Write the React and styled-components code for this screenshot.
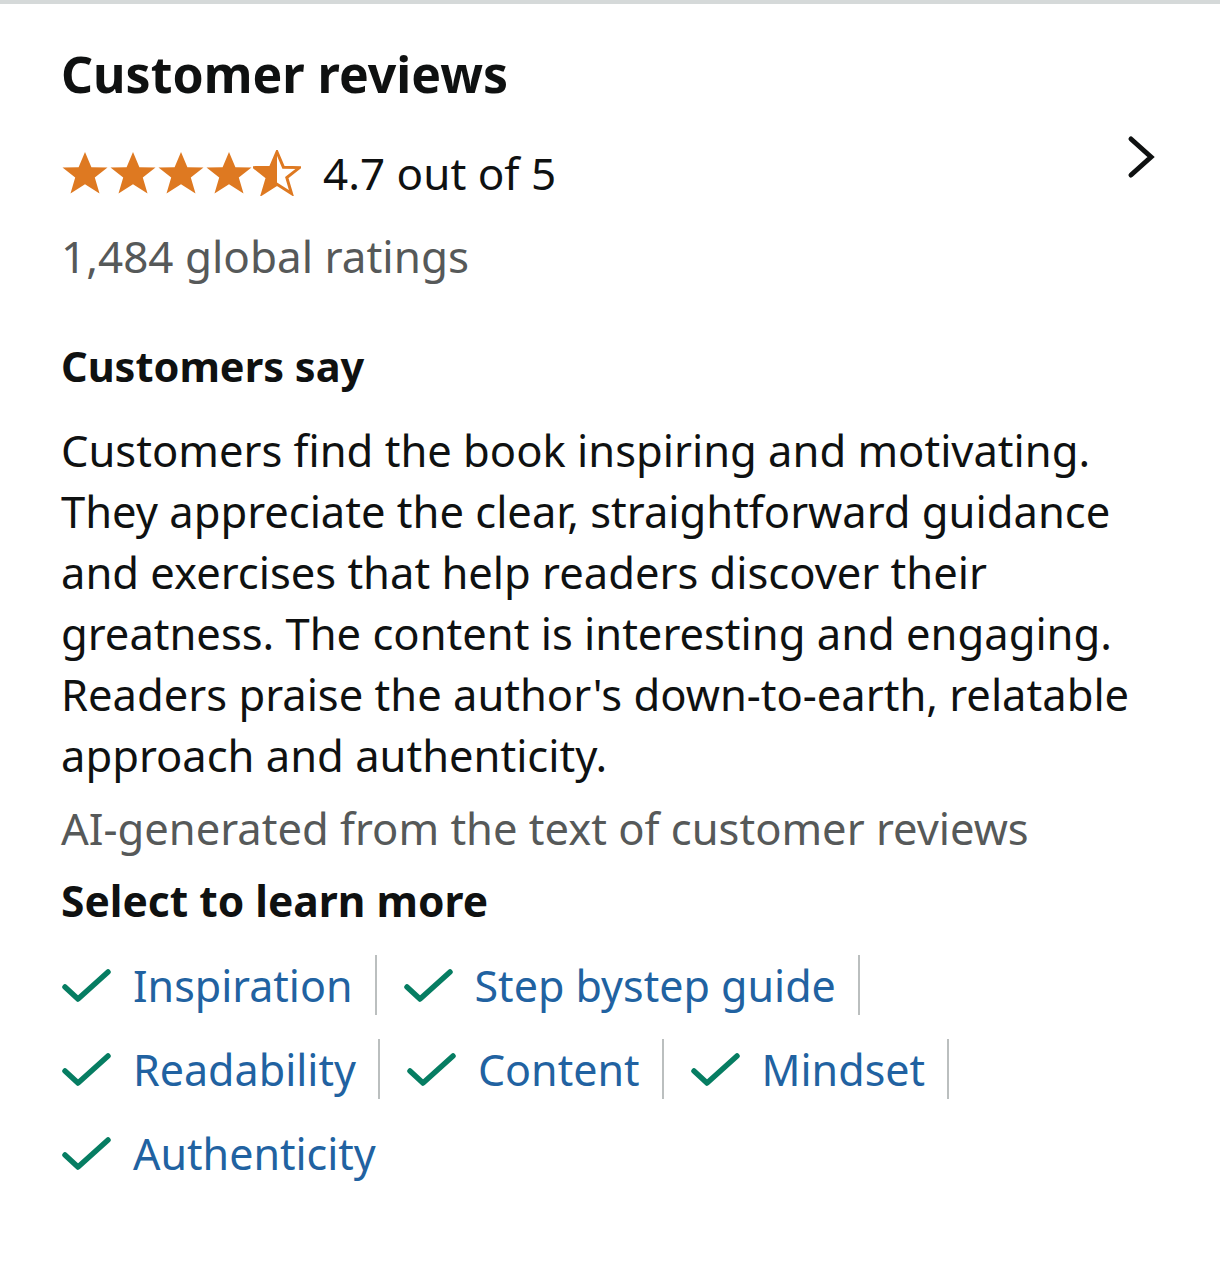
import React from "react";
import styled, { createGlobalStyle } from "styled-components";

const GlobalStyle = createGlobalStyle`
  html, body {
    margin: 0;
    padding: 0;
    background: #fff;
  }
  body {
    font-family: "Noto Sans", "Open Sans", sans-serif;
    color: #0f1111;
  }
`;

const Card = styled.section`
  border-top: 4px solid #d5d9d9;
  padding: 37px 62px 60px 61px;
  min-height: 1180px;
`;

const Title = styled.h2`
  margin: 0;
  font-size: 50px;
  font-weight: 700;
  line-height: 66px;
`;

const RatingRow = styled.a`
  display: flex;
  align-items: center;
  margin-top: 36px;
  color: #0f1111;
  text-decoration: none;
`;

const Stars = styled.div`
  display: flex;
  margin-right: 22px;
`;

const RatingText = styled.span`
  font-size: 44px;
  flex: 1;
`;

const Chevron = styled.span`
  display: flex;
  align-self: flex-start;
  margin-top: -8px;
  margin-right: 1px;
`;

const Count = styled.div`
  margin-top: 23px;
  font-size: 44px;
  color: #565959;
`;

const SubHeading = styled.h3`
  margin: ${(p) => p.$top}px 0 0;
  font-size: ${(p) => p.$size}px;
  font-weight: 700;
  line-height: 56px;
`;

const Summary = styled.p`
  margin: 26px 0 0;
  font-size: 43.5px;
  line-height: 61px;
`;

const Note = styled.p`
  margin: 12px 0 0;
  font-size: 43.5px;
  line-height: 61px;
  color: #565959;
`;

const AspectList = styled.div`
  display: flex;
  flex-direction: column;
  gap: 24px;
  margin-top: 26px;
`;

const AspectRow = styled.div`
  display: flex;
  flex-wrap: wrap;
`;

const Aspect = styled.a`
  display: flex;
  align-items: center;
  gap: 20px;
  height: 60px;
  padding: 0 ${(p) => (p.$last ? 0 : 22)}px 0 ${(p) => (p.$first ? 0 : 26)}px;
  border-right: ${(p) => (p.$last ? "none" : "2px solid #bbbfbf")};
  color: #2162a1;
  font-size: 43px;
  text-decoration: none;
`;

const Check = () => (
  <svg width="52" height="34" viewBox="0 0 52 34" fill="none">
    <path
      d="M4 19 L17 31 L47 4"
      stroke="#067d62"
      strokeWidth="5.5"
      strokeLinecap="round"
      strokeLinejoin="round"
    />
  </svg>
);

const starPath =
  "M24 2 L30.4 17.2 L46.5 17.6 L33.8 27.6 L38.5 43.5 L24 34.2 L9.5 43.5 L14.2 27.6 L1.5 17.6 L17.6 17.2 Z";

const Star = ({ half }) => (
  <svg width="48" height="46" viewBox="0 0 48 46">
    {half ? (
      <>
        <defs>
          <clipPath id="left-half">
            <rect x="0" y="0" width="24" height="46" />
          </clipPath>
        </defs>
        <path d={starPath} fill="none" stroke="#de7921" strokeWidth="3" />
        <path d={starPath} fill="#de7921" clipPath="url(#left-half)" />
      </>
    ) : (
      <path d={starPath} fill="#de7921" />
    )}
  </svg>
);

const aspectRows = [
  ["Inspiration", "Step bystep guide"],
  ["Readability", "Content", "Mindset"],
  ["Authenticity"],
];

export default function App() {
  return (
    <>
      <GlobalStyle />
      <Card>
        <Title>Customer reviews</Title>
        <RatingRow href="#">
          <Stars>
            <Star />
            <Star />
            <Star />
            <Star />
            <Star half />
          </Stars>
          <RatingText>4.7 out of 5</RatingText>
          <Chevron>
            <svg width="30" height="44" viewBox="0 0 30 44" fill="none">
              <path
                d="M4 4 L24 22 L4 40"
                stroke="#0f1111"
                strokeWidth="5"
                strokeLinecap="round"
              />
            </svg>
          </Chevron>
        </RatingRow>
        <Count>1,484 global ratings</Count>

        <SubHeading $top={52} $size={41.5}>Customers say</SubHeading>
        <Summary>
          Customers find the book inspiring and motivating. They appreciate the
          clear, straightforward guidance and exercises that help readers
          discover their greatness. The content is interesting and engaging.
          Readers praise the author's down-to-earth, relatable approach and
          authenticity.
        </Summary>
        <Note>AI-generated from the text of customer reviews</Note>

        <SubHeading as="h4" $top={14} $size={42.5}>Select to learn more</SubHeading>
        <AspectList>
          {aspectRows.map((row, r) => (
            <AspectRow key={r}>
              {row.map((label, i) => (
                <Aspect
                  href="#"
                  key={label}
                  $first={i === 0}
                  $last={r === aspectRows.length - 1}
                >
                  <Check />
                  {label}
                </Aspect>
              ))}
            </AspectRow>
          ))}
        </AspectList>
      </Card>
    </>
  );
}
